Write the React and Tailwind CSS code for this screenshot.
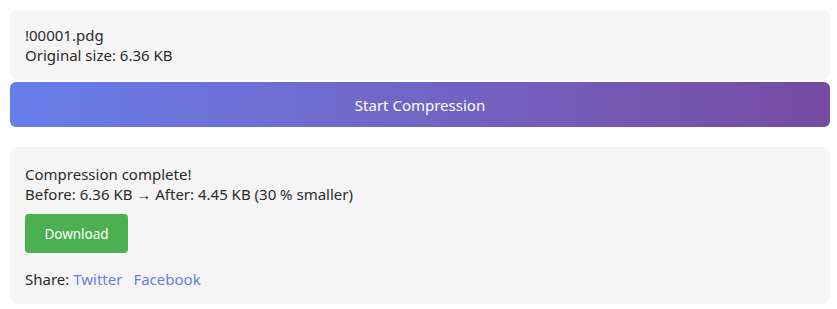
import React from "react";

const App = () => {
  return (
    <div
      className="w-full bg-white pt-[10px] pl-[10px] pr-[7px] pb-[6px] text-[15px] leading-[20px] text-[#2b2b2b]"
      style={{ fontFamily: '"Noto Sans", "Open Sans", sans-serif' }}
    >
      <div className="bg-[#f5f5f5] rounded-lg px-[15px] py-[15px]">
        <p>!00001.pdg</p>
        <p>Original size: 6.36 KB</p>
      </div>
      <button className="mt-[2px] w-full h-[45px] rounded-md text-white text-[15px] bg-gradient-to-r from-[#667eea] to-[#764ba2]">
        Start Compression
      </button>
      <div className="mt-[20px] bg-[#f5f5f5] rounded-lg px-[15px] pt-[17px] pb-[15px]">
        <p>Compression complete!</p>
        <p>Before: 6.36 KB → After: 4.45 KB (30 % smaller)</p>
        <button className="mt-[10px] w-[103px] h-[39px] rounded bg-[#4caf50] text-white text-[13.5px]">
          Download
        </button>
        <p className="mt-[16px]">
          Share:{" "}
          <a className="text-[#667eea] mr-[11px]" href="#">
            Twitter
          </a>
          <a className="text-[#667eea]" href="#">
            Facebook
          </a>
        </p>
      </div>
    </div>
  );
};

export default App;
